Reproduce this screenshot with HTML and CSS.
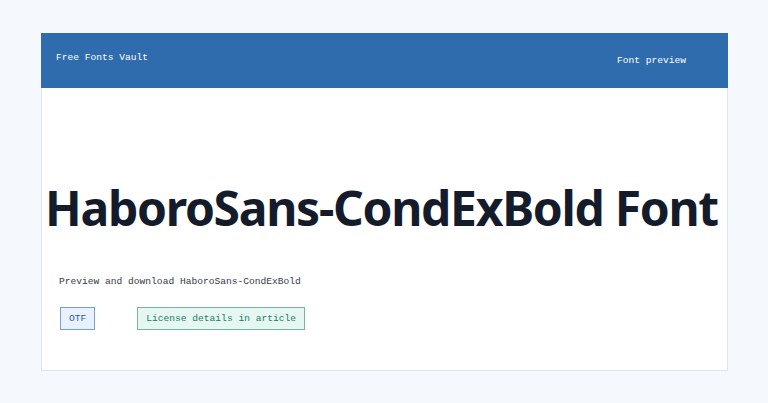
FILE: index.html
```html
<!DOCTYPE html>
<html lang="en">
  <head>
    <meta charset="UTF-8" />
    <meta name="viewport" content="width=device-width, initial-scale=1.0" />
    <title>HaboroSans-CondExBold Font</title>
    <link rel="stylesheet" href="styles.css">
  </head>

  <body>
    <div id="wrap">
      <div class="top">
        <span class="logo">Free Fonts Vault</span>
        <span class="nav">Font preview</span>
      </div>

      <div class="main">
        <h1 class="title">HaboroSans-CondExBold Font</h1>
        <p class="desc">Preview and download HaboroSans-CondExBold</p>
        <div class="tags">
          <span class="tag otf">OTF</span>
          <span class="tag license">License details in article</span>
        </div>
      </div>
    </div>
  </body>
</html>
```

FILE: styles.css
```css
* {
  margin: 0;
  padding: 0;
  box-sizing: border-box;
}

body {
  background: #f5f9fe;
  font-family: "Liberation Mono", monospace;
  padding: 33px 40px;
}

#wrap {
  width: 687px;
  margin-left: 1px;
  background: #fff;
  border: 1px solid #dfe6ef;
  height: 338px;
}

#wrap .top {
  display: flex;
  justify-content: space-between;
  align-items: center;
  height: 55px;
  margin: -1px -1px 0;
  padding: 0 42px 0 15px;
  background: #2f6cad;
  color: #fff;
  font-size: 9.6px;
}

#wrap .top .logo {
  margin-top: -6px;
}

#wrap .top .nav {
  margin-top: -1px;
}

#wrap .main {
  padding: 0 16px;
}

#wrap .title {
  font-family: "Noto Sans", sans-serif;
  font-weight: 700;
  font-size: 48px;
  letter-spacing: -1.3px;
  color: #141b2b;
  margin: 96px -9px 0 -15px;
  line-height: 1;
  text-align: center;
  white-space: nowrap;
}

#wrap .desc {
  font-size: 9.6px;
  color: #333a48;
  margin: 44px 0 0 1px;
}

#wrap .tags {
  display: flex;
  gap: 42px;
  margin: 20px 0 0 2px;
}

#wrap .tag {
  display: inline-block;
  height: 23px;
  line-height: 21px;
  padding: 0 8px;
  font-size: 9.6px;
}

#wrap .tag.otf {
  background: #e8f1fd;
  border: 1px solid #77a1d3;
  color: #2f5f98;
}

#wrap .tag.license {
  background: #e6f7f2;
  border: 1px solid #78b4a6;
  color: #1f7a64;
}
```
